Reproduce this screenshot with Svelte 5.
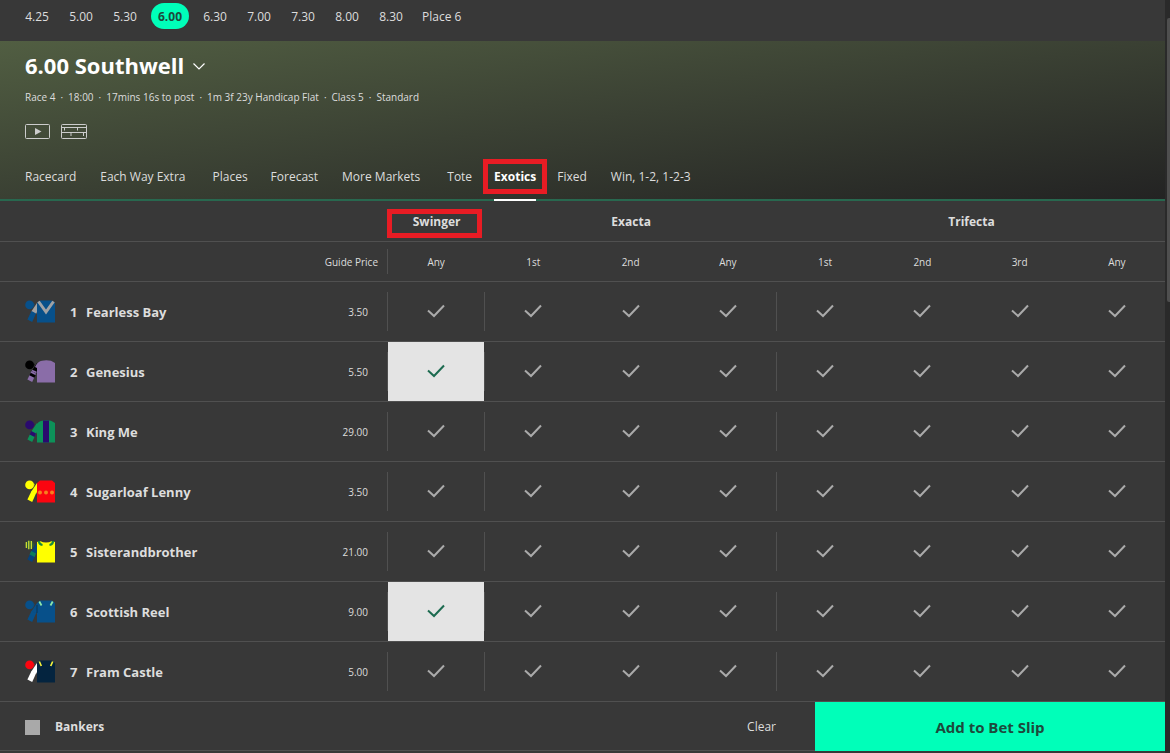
<script>
  const times = ['4.25', '5.00', '5.30', '6.00', '6.30', '7.00', '7.30', '8.00', '8.30', 'Place 6'];
  const details = ['Race 4', '18:00', '17mins 16s to post', '1m 3f 23y Handicap Flat', 'Class 5', 'Standard'];
  const tabs = ['Racecard', 'Each Way Extra', 'Places', 'Forecast', 'More Markets', 'Tote', 'Exotics', 'Fixed', 'Win, 1-2, 1-2-3'];
  const columns = [
    { label: 'Any', group: 'Swinger', first: true },
    { label: '1st', group: 'Exacta', first: true },
    { label: '2nd', group: 'Exacta' },
    { label: 'Any', group: 'Exacta' },
    { label: '1st', group: 'Trifecta', first: true },
    { label: '2nd', group: 'Trifecta' },
    { label: '3rd', group: 'Trifecta' },
    { label: 'Any', group: 'Trifecta' }
  ];
  const blue = '#07508a';
  const runners = [
    { name: 'Fearless Bay', price: '3.50', cap: blue, upper: '#a0a2a4', sleeve: blue, body: blue, pattern: 'chevron' },
    { name: 'Genesius', price: '5.50', cap: '#000', upper: '#000', sleeve: '#8a6da8', body: '#8a6da8', pattern: 'plain' },
    { name: 'King Me', price: '29.00', cap: '#2a0a6e', upper: '#0d9159', sleeve: '#0d9159', body: '#0d9159', pattern: 'stripes' },
    { name: 'Sugarloaf Lenny', price: '3.50', cap: '#ffff00', upper: '#ffff00', sleeve: '#ffff00', body: '#fb0510', pattern: 'dots' },
    { name: 'Sisterandbrother', price: '21.00', cap: '#2d5a3a', upper: '#07427a', sleeve: '#07427a', body: '#ffff00', pattern: 'braces' },
    { name: 'Scottish Reel', price: '9.00', cap: blue, upper: blue, sleeve: blue, body: blue, pattern: 'epaulets' },
    { name: 'Fram Castle', price: '5.00', cap: '#fb0510', upper: '#fff', sleeve: '#fff', body: '#04243f', pattern: 'gold' }
  ];
  let selected = $state({ '1-0': true, '5-0': true });
  let bankers = $state(false);
  const toggle = (key) => (selected[key] = !selected[key]);
</script>

{#snippet silk(r)}
  <svg class="silk" viewBox="0 0 30 23" aria-hidden="true">
    <circle cx="4.6" cy="4.9" r="4.4" fill={r.cap} />
    <path d="M5.5 9 L9 5.5 L8.6 2 L9.6 5 Z" fill={r.cap} />
    <path d="M12 3 L6.3 11.5 L11 14 L12 12Z" fill={r.upper} />
    <path d="M6.5 11 L11 13.6 L7.2 22 L2.4 19.6Z" fill={r.sleeve} />
    {#if r.pattern === 'stripes' || r.pattern === 'plain'}
      <path d="M12 22.5 V8 L10 7 Q13 1 17 .8 Q21 -.2 26 .8 L30 3 V22.5Z" fill={r.body} />
    {:else if r.pattern === 'braces'}
      <path d="M12 22.5 V2 L15 1 Q21 4 27 1 L30 2 V22.5Z" fill={r.body} />
    {:else}
      <path d="M12 22.5 V3 L15 .6 H27 L30 3 V22.5Z" fill={r.body} />
    {/if}
    {#if r.pattern === 'chevron'}
      <path d="M13.5 1.5 L21 12 L28.5 1.5" fill="none" stroke="#a0a2a4" stroke-width="3" />
    {:else if r.pattern === 'plain'}
      <path d="M7 10.5 L11.5 12.5" stroke="#8a6da8" stroke-width="1.4" />
      <path d="M5 14 L10 16.5" stroke="#000" stroke-width="3" />
    {:else if r.pattern === 'stripes'}
      <path d="M18 .5 H24 V22.5 H18Z" fill="#2a0a6e" />
      <path d="M6.2 11 L11 13.5 L9.6 17 L4.6 14.5Z" fill="#2a0a6e" />
    {:else if r.pattern === 'dots'}
      <g fill="#f77f1e"><circle cx="15" cy="12.5" r="2" /><circle cx="21" cy="12.5" r="2" /><circle cx="27" cy="12.5" r="2" /></g>
    {:else if r.pattern === 'braces'}
      <path d="M14 1 Q14 4.5 17.5 5 M28 1 Q28 4.5 24.5 5" fill="none" stroke="#17883f" stroke-width="2.2" />
      <path d="M6.2 11 L11 13.5 L9.6 17 L4.6 14.5Z" fill="#0d7d59" />
      <path d="M1.3 2 V8 M3.8 .8 V9.2 M6.3 1 V9" stroke="#e8ef30" stroke-width="1.1" />
    {:else if r.pattern === 'epaulets'}
      <path d="M14.3 1.5 L16.5 5.5 M27.7 1.5 L25.5 5.5" stroke="#8ee6a8" stroke-width="1.8" />
      <path d="M12 5 V13" stroke="#123" stroke-width=".6" />
    {:else if r.pattern === 'gold'}
      <path d="M14.3 1.5 L16.3 6 M27.7 1.5 L25.7 6" stroke="#f5f03a" stroke-width="1.7" />
    {/if}
  </svg>
{/snippet}

<div class="page">
  <main>
    <nav class="times" aria-label="Race times">
      {#each times as t}
        <a href="#race" class:current={t === '6.00'}>{t}</a>
      {/each}
    </nav>

    <header class="hero">
      <h1>
        <button class="meeting">
          6.00 Southwell
          <svg width="12" height="12" viewBox="0 0 12 12" aria-hidden="true"><path d="M.5 4.5 L6 10 L11.5 4.5" fill="none" stroke="currentColor" stroke-width="1.2" /></svg>
        </button>
      </h1>
      <p>
        {#each details as d, i}
          {#if i}<span>·</span>{/if}
          <span>{d}</span>
        {/each}
      </p>
      <div class="media">
        <button aria-label="Watch">
          <svg width="25" height="15" viewBox="0 0 25 15"><rect x=".5" y=".5" width="24" height="14" rx="1" fill="none" stroke="currentColor" /><path d="M10 4 L16.5 7.5 L10 11Z" fill="currentColor" /></svg>
        </button>
        <button aria-label="Starting stalls">
          <svg width="26" height="15" viewBox="0 0 26 15"><rect x=".5" y=".5" width="25" height="14" rx="1" fill="none" stroke="currentColor" /><path d="M1 3.5 H25 M1 8.5 H25 M3.5 4 V6.5 M16.5 4 V6.5 M10 9 V12 M22.5 9 V12" fill="none" stroke="currentColor" /></svg>
        </button>
      </div>
      <nav class="tabs" aria-label="Markets">
        {#each tabs as t}
          <a href="#market" class:active={t === 'Exotics'} class:wide={t.includes(' ')}>{t}</a>
        {/each}
      </nav>
    </header>

    <table>
      <colgroup>
        <col class="runner-col" />
        <col class="price-col" />
        {#each columns as _}<col />{/each}
      </colgroup>
      <thead>
        <tr class="groups">
          <td colspan="2"></td>
          <th class="marked" scope="colgroup">Swinger</th>
          <th colspan="3" scope="colgroup">Exacta</th>
          <th colspan="4" scope="colgroup">Trifecta</th>
        </tr>
        <tr class="places">
          <td></td>
          <th class="guide" scope="col">Guide Price</th>
          {#each columns as c, i}<th scope="col" class:rule={i === 0}>{c.label}</th>{/each}
        </tr>
      </thead>
      <tbody>
        {#each runners as r, n}
          <tr>
            <th scope="row"><span class="runner">{@render silk(r)}<span class="number">{n + 1}</span>{r.name}</span></th>
            <td class="price">{r.price}</td>
            {#each columns as c, i}
              <td class="choice" class:rule={c.first}>
                <button
                  class="pick"
                  class:on={selected[`${n}-${i}`]}
                  aria-pressed={!!selected[`${n}-${i}`]}
                  aria-label={`${r.name} ${c.group} ${c.label}`}
                  onclick={() => toggle(`${n}-${i}`)}
                >
                  <svg width="18" height="15" viewBox="0 0 18 15"><path d="M1 6.5 L7 12 L17 1.5" fill="none" stroke="currentColor" stroke-width="2" /></svg>
                </button>
              </td>
            {/each}
          </tr>
        {/each}
      </tbody>
    </table>

    <footer>
      <label><input type="checkbox" bind:checked={bankers} />Bankers</label>
      <button class="clear" onclick={() => (selected = {})}>Clear</button>
      <button class="add">Add to Bet Slip</button>
    </footer>
  </main>
  <div class="scroll"><div class="thumb"></div></div>
</div>

<style>
  :global(body) {
    margin: 0;
    background: #383838;
  }
  .page {
    display: flex;
    min-height: 100vh;
    box-sizing: border-box;
    overflow: hidden;
    background: #383838;
    color: #ddd;
    font: 12px/16px 'Open Sans', 'Noto Sans', sans-serif;
  }
  main {
    flex: 1;
    min-width: 0;
  }
  button {
    padding: 0;
    border: 0;
    background: none;
    color: inherit;
    font: inherit;
    cursor: pointer;
  }
  a {
    color: inherit;
    text-decoration: none;
  }
  .times {
    display: flex;
    align-items: flex-start;
    gap: 8px;
    height: 38px;
    padding: 3px 19px 0;
  }
  .times a {
    box-sizing: border-box;
    min-width: 36px;
    padding: 1px 5px 0;
    border-radius: 13px;
    line-height: 25px;
    text-align: center;
  }
  .times .current {
    min-width: 38px;
    background: #00ffb9;
    color: #1d4a3c;
    font-weight: 700;
  }
  .hero {
    height: 158px;
    padding: 0 25px;
    border-bottom: 2px solid #28684f;
    background: linear-gradient(to bottom right, #515e42 0%, #3a4033 50%, #232323 100%);
  }
  h1 {
    margin: 0;
    padding-top: 8px;
    color: #fff;
    font-size: 22px;
    line-height: 32px;
  }
  .meeting {
    display: flex;
    align-items: center;
    gap: 9px;
  }
  .hero p {
    display: flex;
    gap: 5px;
    margin: 8px 0 0;
    font-size: 10px;
    line-height: 16px;
  }
  .media {
    display: flex;
    gap: 11px;
    margin-top: 19px;
    color: #ccc;
  }
  .media button {
    height: 15px;
  }
  svg {
    display: block;
  }
  .tabs {
    display: flex;
    gap: 23px;
    margin-top: 20px;
  }
  .tabs a {
    position: relative;
    padding: 10px 0 14px;
    white-space: nowrap;
  }
  .tabs .wide {
    padding-right: 4px;
    padding-left: 1px;
  }
  .tabs .active {
    margin: 0 -2px 0 -1px;
    border-bottom: 2px solid #fff;
    color: #fff;
    font-weight: 700;
  }
  .tabs .active::before {
    content: '';
    position: absolute;
    inset: 0 -11px 5px;
    border: 5px solid #e81c24;
  }
  table {
    width: 100%;
    table-layout: fixed;
    border-spacing: 0;
  }
  .runner-col {
    width: 282px;
  }
  .price-col {
    width: 105px;
  }
  th,
  td {
    position: relative;
    height: 59px;
    padding: 0;
    border-bottom: 1px solid #505050;
    text-align: center;
  }
  .groups th,
  .groups td {
    height: 38px;
    padding: 2px 0 0 2px;
  }
  .places th,
  .places td {
    height: 39px;
    padding-left: 1px;
    font-size: 10px;
    font-weight: 400;
  }
  .marked::before {
    content: '';
    position: absolute;
    inset: 8px 2px 3px 0;
    border: 5px solid #e81c24;
  }
  .places .guide {
    padding-right: 9px;
    text-align: right;
  }
  .rule::before {
    content: '';
    position: absolute;
    top: 10px;
    bottom: 10px;
    left: 0;
    border-left: 1px solid #505050;
  }
  .places .rule::before {
    top: 7px;
    bottom: 7px;
  }
  .runner {
    display: flex;
    align-items: center;
    padding-left: 25px;
    font-size: 13px;
  }
  .silk {
    width: 30px;
    height: 23px;
  }
  .number {
    width: 16px;
    margin-left: 15px;
    text-align: left;
  }
  .price {
    padding-right: 19px;
    font-size: 10px;
    text-align: right;
  }
  .choice {
    padding-left: 1px;
  }
  .pick {
    position: relative;
    display: grid;
    place-items: center;
    width: 100%;
    height: 59px;
    color: #aaa;
  }
  .pick.on {
    background: #e4e4e4;
    color: #1d6b50;
  }
  footer {
    display: flex;
    align-items: center;
    height: 48px;
    border-bottom: 1px solid #505050;
  }
  label {
    display: flex;
    align-items: center;
    gap: 15px;
    margin-right: auto;
    padding: 2px 0 0 25px;
    font-weight: 700;
  }
  input {
    appearance: none;
    width: 15px;
    height: 15px;
    margin: 0;
    background: #a9a9a9;
  }
  input:checked {
    background: #00ffb9;
  }
  .clear {
    padding: 2px 39px 0;
  }
  .add {
    width: 350px;
    height: 50px;
    padding-top: 2px;
    background: #00ffb9;
    color: #1d4a3c;
    font-size: 15px;
    font-weight: 700;
  }
  .scroll {
    width: 5px;
    box-sizing: border-box;
    padding: 18px 0 0 2px;
    background: #2a2a2a;
  }
  .thumb {
    height: 284px;
    border-radius: 2px 0 0 2px;
    background: #4f4f4f;
  }
</style>
